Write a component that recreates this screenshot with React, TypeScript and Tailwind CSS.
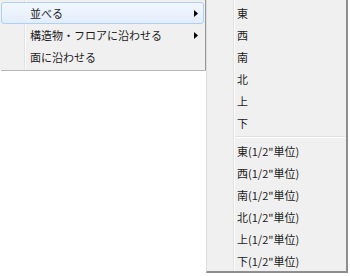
const font = { fontFamily: '"Noto Sans CJK JP", "Noto Sans", sans-serif' }

const main = [
  { label: "並べる", sub: true, active: true },
  { label: "構造物・フロアに沿わせる", sub: true },
  { label: "面に沿わせる", sub: false },
]
const dirs = ["東", "西", "南", "北", "上", "下"]

function Arrow() {
  return (
    <svg width="4" height="7" viewBox="0 0 4 7" className="mr-[2px]">
      <path d="M0 0 L4 3.5 L0 7 Z" fill="#000" />
    </svg>
  )
}

export default function App() {
  return (
    <div className="w-[350px] h-[276px] bg-white flex items-start text-[11px] text-[#1b1b1b] overflow-hidden" style={font}>
      {/* メインメニュー */}
      <div className="relative w-[206px] h-[70px] bg-[#f0f0f0] border-r border-[#979797] pt-[2px] px-[1px] shadow-[1px_1px_0_#b8b8b8]">
        <div className="absolute left-[24px] top-0 bottom-0 w-[2px] border-l border-[#e2e3e3] bg-white/70" />
        {main.map((m) => (
          <div
            key={m.label}
            className={
              "relative h-[22px] flex items-center pl-[28px] pr-[3px] rounded-[3px] border " +
              (m.active ? "border-[#aecff7] bg-gradient-to-b from-[#f2f7fd] to-[#e3edfb]" : "border-transparent")
            }
          >
            <span className="flex-1 leading-none">{m.label}</span>
            {m.sub && <Arrow />}
          </div>
        ))}
      </div>

      {/* サブメニュー */}
      <div className="relative w-[142px] h-[273px] bg-[#f0f0f0] border-r-2 border-b-2 border-r-[#8e8e8e] border-b-[#8e8e8e] border-l border-l-[#dcdcdc] pt-[2px]">
        <div className="absolute left-[26px] top-0 bottom-0 w-[2px] border-l border-[#e2e3e3] bg-white/70" />
        {dirs.map((d) => (
          <div key={d} className="h-[22px] flex items-center pl-[30px]">{d}</div>
        ))}
        <div className="h-[6px] flex items-center pl-[28px] pr-[1px]">
          <div className="w-full border-t border-[#e0e0e0] border-b border-b-white" />
        </div>
        {dirs.map((d) => (
          <div key={d + "h"} className="h-[22px] flex items-center pl-[30px]">{d}(1/2"単位)</div>
        ))}
      </div>
    </div>
  )
}
